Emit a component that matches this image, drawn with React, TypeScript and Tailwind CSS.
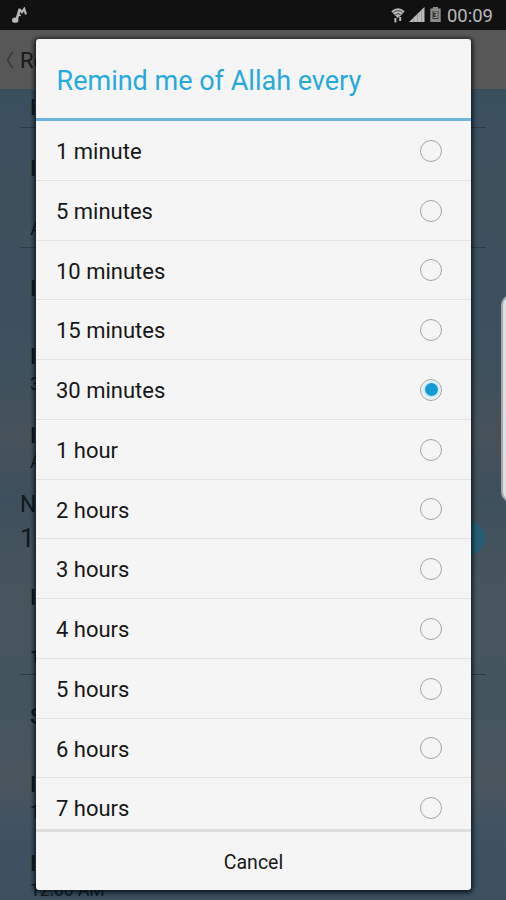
import { useState } from 'react';

const options = [
  '1 minute', '5 minutes', '10 minutes', '15 minutes', '30 minutes', '1 hour',
  '2 hours', '3 hours', '4 hours', '5 hours', '6 hours', '7 hours',
];

// Rows of the settings page that lies under the dialog
const settings = [
  { text: 'I', style: 'h-[39px] pl-[10px] text-[22px] font-medium border-b border-[#2b3a45]' },
  { text: 'I', style: 'h-[82px] pl-[10px] text-[22px] font-medium' },
  { text: 'A', style: 'h-[38px] pl-[10px] text-[19px] border-b border-[#2b3a45]' },
  { text: 'I', style: 'h-[82px] pl-[10px] text-[22px] font-medium' },
  { text: 'I', style: 'h-[54px] pl-[10px] text-[22px] font-medium' },
  { text: '3', style: 'h-[0px] pl-[10px] text-[18px]' },
  { text: 'I', style: 'h-[78px] pt-[26px] pl-[10px] text-[22px] font-medium' },
  { text: 'A', style: 'h-[0px] pl-[10px] text-[18px]' },
  { text: 'N', style: 'h-[60px] pt-[24px] pl-0 text-[23px]' },
  { text: '1', style: 'h-[32px] pl-0 text-[26px]' },
];

function StatusBar() {
  return (
    <div className="flex h-[30px] items-center bg-[#111111] pl-[11px] pr-[13px] text-[#b9b9b9]">
      <svg width="17" height="17" viewBox="0 0 17 17" fill="none" stroke="currentColor">
        <ellipse cx="4.2" cy="13.2" rx="3.2" ry="2.6" fill="currentColor" stroke="none" />
        <path d="M5.5 13 8.8 1.8" strokeWidth="2.6" />
        <path d="M8.2 2 11 5.2l2.2-3.4 1.8 5.6" strokeWidth="2.1" />
        <path d="m7.2 7.8 2.6.8" strokeWidth="1.6" />
      </svg>
      <div className="ml-auto flex items-center">
        <svg width="14" height="17" viewBox="0 0 14 17" fill="none" stroke="currentColor">
          <path d="M.3 4.2Q7-1.6 13.7 4.2L7 11.5Z" fill="currentColor" stroke="none" />
          <path d="M2.6 5.3Q7 2 11.4 5.3M4.5 7.6Q7 5.7 9.5 7.6" stroke="#3a3a3a" strokeWidth="1" />
          <path d="M4.4 10.8v4.4M9 9.8v3.6" stroke="#111111" strokeWidth="3.2" />
          <path d="M4.4 11v4.4M9.2 10v4" strokeWidth="2" />
        </svg>
        <svg className="ml-[4px]" width="16" height="16" viewBox="0 0 16 16" fill="currentColor">
          <path d="M15.5 0v15H0Z" />
          <path d="M4.5 10v5M8.5 6v9M12.5 2v13" stroke="#777" strokeWidth=".5" />
        </svg>
        <svg className="ml-[5px]" width="11" height="16" viewBox="0 0 11 16">
          <path d="M3 0h5v1.5h2.7V15H.3V1.5H3Z" fill="#8c8c8c" />
          <path d="M2.6 4h5.8v8H2.6Z" fill="#303030" />
          <path d="M3.5 5.2h3.5v2.6H4.5M7 7.8v2.7H3.5" stroke="#a0a0a0" fill="none" strokeWidth="1.2" />
        </svg>
        <span className="ml-[6px] pt-[2px] text-[18.5px] leading-none">00:09</span>
      </div>
    </div>
  );
}

function SettingsPage() {
  return (
    <div className="flex h-[900px] w-[506px] flex-col">
      <StatusBar />
      <header className="flex h-[59px] shrink-0 items-center bg-[#575757] pl-[6px] text-[22px] text-[#171717]">
        <svg width="8" height="18" viewBox="0 0 8 18" fill="none" stroke="#3a3a3a" strokeWidth="1.6">
          <path d="M6.5 1 1.5 9l5 8" />
        </svg>
        <span className="ml-[6px] pt-[1px]">Re</span>
      </header>
      <main className="flex-1 overflow-hidden bg-[linear-gradient(180deg,#3a4f5e_0px,#3e505c_100px,#3c505e_230px,#3f515d_290px,#47525b_345px,#3e505d_410px,#47545d_500px,#43545f_620px,#4b555e_690px,#3e5262_745px,#3c5060_811px)] px-5 text-[#10181e]">
        {settings.map((row, i) => (
          <div key={i} className={`flex items-center leading-none ${row.style}`}>{row.text}</div>
        ))}
        <div className="flex h-[120px] flex-col pl-[10px]">
          <span className="mt-[33px] text-[22px] font-medium leading-none">I</span>
          <span className="mt-[39px] text-[18px] font-medium leading-none">1</span>
        </div>
        <div className="border-t border-[#2b3a45] pl-[10px]">
          <div className="mt-[31px] text-[22px] font-medium leading-none">S</div>
          <div className="mt-[46px] text-[22px] font-medium leading-none">I</div>
          <div className="mt-[7px] text-[18px] leading-none">1</div>
          <div className="mt-[32px] text-[22px] font-medium leading-none">I</div>
          <div className="mt-[7px] text-[17.5px] leading-none">12:00 AM</div>
        </div>
      </main>
    </div>
  );
}

export default function App() {
  const [selected, setSelected] = useState(4);
  return (
    <div className="relative h-[900px] w-[506px] overflow-hidden font-[Roboto,sans-serif]">
      <SettingsPage />
      <div className="absolute left-[450px] top-[521px] h-[34px] w-[35px] rounded-full bg-[#265d74]" />
      <div className="absolute left-[501px] top-[295px] h-[207px] w-[20px] rounded-[12px] border-2 border-[#a3a9ad] bg-[#dedfe1]" />
      <section
        role="dialog"
        className="absolute left-[36px] top-[39px] flex h-[851px] w-[435px] flex-col overflow-hidden rounded-[3px] bg-[#f5f5f5] shadow-[0_1px_4px_2px_rgba(0,10,18,0.75)]"
      >
        <h1 className="flex h-[82px] shrink-0 items-center border-b-[3px] border-[#6db5dc] pl-[20.5px] pt-[6px] text-[27px] leading-none text-[#27aadb]">
          Remind me of Allah every
        </h1>
        <div className="min-h-0 flex-1 overflow-hidden">
          {options.map((label, i) => (
            <button
              key={label}
              onClick={() => setSelected(i)}
              className="flex h-[59.75px] w-full items-center justify-between border-b border-[#e2e2e2] pl-[20px] pr-[29px] text-left text-[22px] leading-none text-[#171717]"
            >
              <span className="pt-[3.5px]">{label}</span>
              <span className="mt-px flex size-[22px] items-center justify-center rounded-full border-[1.5px] border-[#a5a5a5]">
                {i === selected && (
                  <span className="size-[13px] rounded-full bg-[#169bd0] shadow-[0_0_2px_2px_#c9eaf7]" />
                )}
              </span>
            </button>
          ))}
        </div>
        <button className="flex h-[61px] shrink-0 items-center justify-center border-t-[3px] border-[#dedede] pt-[3px] text-[19.5px] leading-none text-[#171717]">
          Cancel
        </button>
      </section>
    </div>
  );
}
